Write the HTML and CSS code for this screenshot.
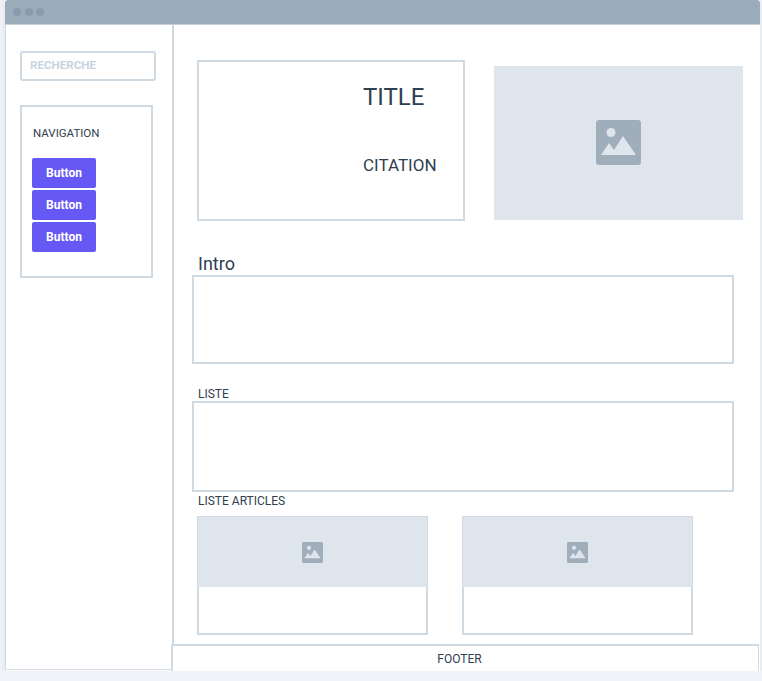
FILE: index.html
```html
<!DOCTYPE html>
<html lang="en">
<head>
    <meta charset="UTF-8">
    <meta name="viewport" content="width=device-width, initial-scale=1.0">
    <title>Wireframe</title>
    <link rel="stylesheet" href="styles.css">
</head>
<body>

    <div class="window">
        <div class="titlebar">
            <span class="dot"></span>
            <span class="dot"></span>
            <span class="dot"></span>
        </div>

        <div class="window-body">
            <aside class="sidebar">
                <div class="search">RECHERCHE</div>
                <nav class="nav-box">
                    <div class="nav-title">NAVIGATION</div>
                    <a class="btn">Button</a>
                    <a class="btn">Button</a>
                    <a class="btn">Button</a>
                </nav>
            </aside>

            <div class="main">
                <div class="content">
                    <div class="hero">
                        <div class="hero-text">
                            <div class="hero-title">TITLE</div>
                            <div class="hero-citation">CITATION</div>
                        </div>
                        <div class="hero-image">
                            <svg class="icon-large" viewBox="0 0 45 45"><use href="#picture"></use></svg>
                        </div>
                    </div>

                    <div class="intro-label">Intro</div>
                    <div class="box intro-box"></div>

                    <div class="small-label liste-label">LISTE</div>
                    <div class="box liste-box"></div>

                    <div class="small-label articles-label">LISTE ARTICLES</div>
                    <div class="articles">
                        <div class="article">
                            <div class="article-image">
                                <svg class="icon-small" viewBox="0 0 45 45"><use href="#picture"></use></svg>
                            </div>
                        </div>
                        <div class="article">
                            <div class="article-image">
                                <svg class="icon-small" viewBox="0 0 45 45"><use href="#picture"></use></svg>
                            </div>
                        </div>
                    </div>
                </div>

                <footer class="footer">FOOTER</footer>
            </div>
        </div>
    </div>

    <svg class="icon-defs" width="0" height="0">
        <symbol id="picture" viewBox="0 0 45 45">
            <rect width="45" height="45" rx="3" fill="#a0aebb"></rect>
            <circle cx="15" cy="12.5" r="4.5" fill="#dfe5ec"></circle>
            <path d="M5 35 L13 23 L18 30 L27 16 L40 35 Z" fill="#dfe5ec"></path>
        </symbol>
    </svg>

</body>
</html>
```

FILE: styles.css
```css
body {
    font-family: 'Roboto', 'Liberation Sans', sans-serif;
    margin: 0;
    padding: 0;
    background-color: #f0f3f7;
    color: #2f4050;
}

.window {
    width: 755px;
    height: 671px;
    margin-left: 5px;
    background-color: #fff;
    box-shadow: 0 2px 6px rgba(160, 174, 187, 0.25);
    display: flex;
    flex-direction: column;
}

.titlebar {
    height: 25px;
    flex-shrink: 0;
    box-sizing: border-box;
    padding: 8px;
    display: flex;
    gap: 3.5px;
    background-color: #9aabb9;
    border-bottom: 1px solid #c5d0da;
    border-radius: 3px 3px 0 0;
}

.dot {
    width: 8px;
    height: 8px;
    border-radius: 50%;
    background-color: #8a9cac;
}

.window-body {
    flex: 1;
    display: flex;
    min-height: 0;
}

.sidebar {
    width: 169px;
    flex-shrink: 0;
    box-sizing: border-box;
    padding: 26px 15px 0 14px;
    border-left: 1px solid #cfd9e2;
    border-right: 2px solid #cfd9e2;
    border-bottom: 1px solid #d5dbe1;
    margin-bottom: 1px;
}

.search {
    width: 136px;
    height: 30px;
    box-sizing: border-box;
    border: 2px solid #d0dae3;
    border-radius: 3px;
    padding-left: 8px;
    font-size: 11.6px;
    font-weight: 700;
    line-height: 25px;
    color: #c8d4df;
}

.nav-box {
    width: 133px;
    height: 173px;
    box-sizing: border-box;
    margin-top: 24px;
    padding: 19px 10px 0;
    border: 2px solid #d0dae3;
}

.nav-title {
    font-size: 11.5px;
    line-height: 14px;
    margin: 0 0 18px 1px;
}

.btn {
    display: block;
    width: 64px;
    height: 30px;
    margin-bottom: 2px;
    background-color: #6558f5;
    border-radius: 2px;
    color: #fff;
    font-size: 12px;
    font-weight: 700;
    line-height: 30px;
    text-align: center;
}

.main {
    flex: 1;
    min-width: 0;
    display: flex;
    flex-direction: column;
}

.content {
    flex: 1;
    padding: 35px 0 0 18px;
}

.hero {
    display: flex;
    align-items: flex-start;
    margin-left: 5px;
}

.hero-text {
    width: 268px;
    height: 161px;
    box-sizing: border-box;
    border: 2px solid #d0dae3;
    padding: 20px 0 0 164px;
}

.hero-title {
    font-size: 24px;
    line-height: 30px;
}

.hero-citation {
    font-size: 17px;
    line-height: 20px;
    margin-top: 43px;
}

.hero-image {
    width: 249px;
    height: 154px;
    box-sizing: border-box;
    padding-bottom: 2px;
    margin: 6px 0 0 29px;
    background-color: #dfe5ec;
    display: flex;
    align-items: center;
    justify-content: center;
}

.icon-large {
    width: 45px;
    height: 45px;
}

.icon-small {
    width: 21px;
    height: 21px;
}

.icon-defs {
    position: absolute;
}

.intro-label {
    margin: 31px 0 0 6px;
    font-size: 18px;
    line-height: 23px;
}

.box {
    width: 542px;
    box-sizing: border-box;
    border: 2px solid #d0dae3;
}

.intro-box {
    height: 89px;
}

.small-label {
    font-size: 12px;
    line-height: 14px;
    margin-left: 6px;
}

.liste-label {
    margin-top: 23px;
}

.liste-box {
    height: 91px;
}

.articles-label {
    margin-top: 2px;
}

.articles {
    display: flex;
    gap: 34px;
    margin: 8px 0 0 5px;
}

.article {
    width: 231px;
    height: 119px;
    box-sizing: border-box;
    border: 2px solid #d0dae3;
    border-top-width: 1px;
}

.article-image {
    height: 70px;
    margin: 0 -1px;
    background-color: #dfe5ec;
    display: flex;
    align-items: center;
    justify-content: center;
}

.footer {
    height: 27px;
    flex-shrink: 0;
    box-sizing: border-box;
    margin-left: -3px;
    margin-right: 1px;
    padding-right: 12px;
    border: 2px solid #d0dae3;
    border-bottom: none;
    border-right-width: 1px;
    background-color: #fff;
    font-size: 12px;
    line-height: 27px;
    text-align: center;
}
```
